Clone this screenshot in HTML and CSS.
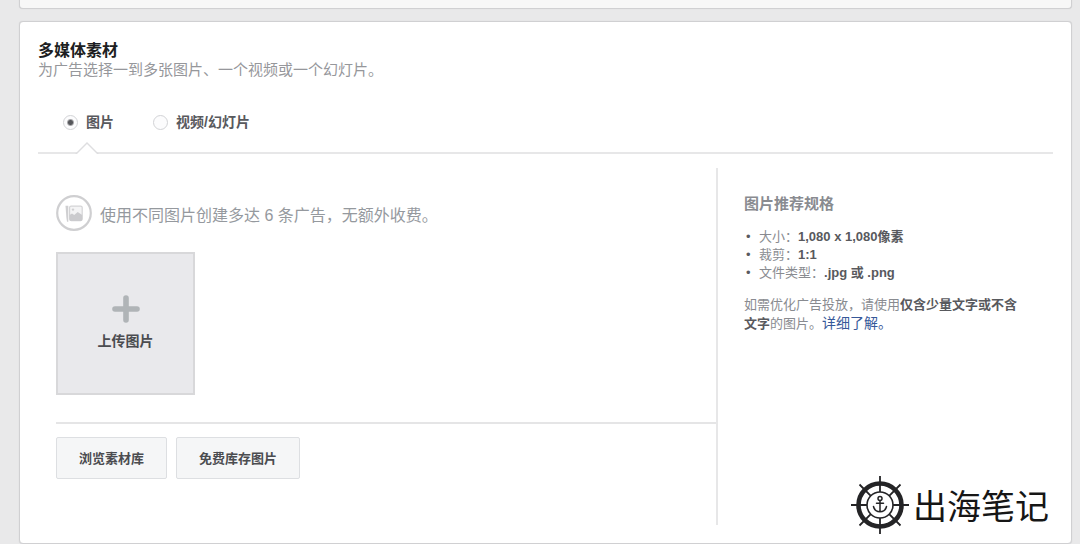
FILE: index.html
```html
<!DOCTYPE html>
<html lang="zh-CN">
<head>
<meta charset="utf-8">
<meta name="viewport" content="width=device-width, initial-scale=1">
<title>多媒体素材</title>
<link rel="stylesheet" href="styles.css">
</head>
<body>
<main class="page">
  <div class="card card-previous"></div>
  <section class="card media">
    <header class="media-header">
      <h1 class="media-title">多媒体素材</h1>
      <p class="media-subtitle">为广告选择一到多张图片、一个视频或一个幻灯片。</p>
    </header>

    <div class="tabs">
      <label class="tab tab-active"><input class="radio" type="radio" name="format" checked>图片</label>
      <label class="tab"><input class="radio" type="radio" name="format">视频/幻灯片</label>
    </div>

    <div class="columns">
      <div class="picker">
        <div class="hint">
          <svg class="hint-icon" viewBox="0 0 36 36" aria-hidden="true">
            <circle cx="18" cy="18" r="16.8" fill="none" stroke="#cfcfd1" stroke-width="2.2"/>
            <path d="M9.500 10.800h2.800v16h-1.300l-.6-4z" fill="#cfcfd1"/>
            <rect x="13.600" y="11.100" width="12.600" height="14.500" rx="1.500" fill="#f4f4f5" stroke="#d4d4d6" stroke-width="1.200"/>
            <circle cx="17" cy="14.600" r="1.200" fill="#cfcfd1"/>
            <path d="M13.600 20l2.400-1.500 2.200 1.500 3.500-3 4.500 3v4.600q0 1.500-1.500 1.500h-9.600q-1.500 0-1.500-1.500z" fill="#cbcbce"/>
          </svg>
          <p class="hint-text">使用不同图片创建多达 6 条广告，无额外收费。</p>
        </div>
        <button class="upload" type="button">
          <svg class="upload-icon" viewBox="0 0 28 28" aria-hidden="true">
            <path d="M14 3v22M3 14h22" stroke="#b0b4b7" stroke-width="5.600" stroke-linecap="round"/>
          </svg>
          上传图片
        </button>
        <div class="actions">
          <button class="button" type="button">浏览素材库</button>
          <button class="button" type="button">免费库存图片</button>
        </div>
      </div>

      <aside class="specs">
        <h2 class="specs-title">图片推荐规格</h2>
        <ul class="specs-list">
          <li>大小：<b>1,080 x 1,080像素</b></li>
          <li>裁剪：<b>1:1</b></li>
          <li>文件类型：<b>.jpg 或 .png</b></li>
        </ul>
        <p class="specs-note">如需优化广告投放，请使用<b>仅含少量文字或不含文字</b>的图片。<a class="link" href="#">详细了解。</a></p>
      </aside>
    </div>

    <div class="brand">
      <svg class="brand-icon" viewBox="0 0 58 58" fill="none" stroke="#242426" aria-hidden="true">
        <circle cx="29" cy="29" r="21.5" stroke-width="4.6"/>
        <circle cx="29" cy="29" r="13" stroke-width="1.6"/>
        <path stroke-width="1.8" d="M29 0v16M29 42v16M0 29h16M42 29h16M8.500 8.500l11.300 11.300M38.200 38.200l11.300 11.300M49.500 8.500L38.200 19.800M19.800 38.200L8.500 49.500"/>
        <g stroke-width="1.5" stroke-linecap="round">
          <circle cx="29" cy="22.400" r="2"/>
          <path d="M29 24.500v11M25.500 27.300h7M22.500 30.500q1 5 6.500 5.300q5.500-.3 6.500-5.300"/>
        </g>
      </svg>
      <span class="brand-name">出海笔记</span>
    </div>
  </section>
</main>
</body>
</html>
```
FILE: styles.css
```css
* {
  box-sizing: border-box;
}

body {
  margin: 0;
  background: #fff;
  color: #4b4f56;
  font-family: "Liberation Sans", "Noto Sans CJK SC", sans-serif;
  font-size: 13px;
  line-height: 18px;
}

h1, h2, p, ul {
  margin: 0;
  padding: 0;
}

button {
  font-family: inherit;
  color: #4b4c50;
  cursor: pointer;
}

.page {
  display: flex;
  flex-direction: column;
  gap: 12px;
  padding: 0 8px 0 19px;
  background: #e9e9ea;
}

.card {
  border: 1px solid #d0d0d2;
  border-radius: 4px;
  background: #fff;
  box-shadow: 0 0 1px #c8c8ca;
}

.card-previous {
  height: 9px;
  border-top: 0;
  border-radius: 0 0 4px 4px;
  background: #f7f7f7;
}

.media {
  position: relative;
  padding: 19px 18px 18px;
}

.media-title {
  color: #1d1e22;
  font-size: 16px;
  line-height: 20px;
}

.media-subtitle {
  color: #96979b;
  font-size: 15px;
  line-height: 18px;
}

.tabs {
  display: flex;
  gap: 39px;
  height: 75px;
  padding: 32px 25px 0;
  border-bottom: 2px solid #e7e7e8;
}

.tab {
  position: relative;
  display: flex;
  align-items: center;
  gap: 8px;
  height: 22px;
  color: #58595d;
  font-size: 14px;
  font-weight: bold;
}

.tab-active::after {
  content: "";
  position: absolute;
  top: 31px;
  left: 12px;
  width: 24px;
  height: 12px;
  background: #dedee0;
  clip-path: polygon(0 100%, 50% 0, 100% 100%);
}

.tab-active::before {
  content: "";
  position: absolute;
  z-index: 1;
  top: 33px;
  left: 12px;
  width: 24px;
  height: 12px;
  background: #fff;
  clip-path: polygon(0 100%, 50% 0, 100% 100%);
}

.radio {
  appearance: none;
  width: 15px;
  height: 15px;
  margin: 0;
  border: 1px solid #d2d3d6;
  border-radius: 50%;
  background: #fcfcfd;
}

.radio:checked {
  background: radial-gradient(circle, #55565a 2px, #fcfcfd 4px);
}

.columns {
  display: grid;
  grid-template-columns: minmax(0, 680fr) minmax(0, 335fr);
  padding-top: 14px;
}

.picker {
  padding: 27px 0 46px 18px;
  border-right: 2px solid #e7e7e8;
}

.hint {
  display: flex;
  align-items: center;
  gap: 8px;
}

.hint-icon {
  flex: none;
  width: 36px;
  height: 36px;
}

.hint-text {
  padding-top: 6px;
  color: #95999e;
  font-size: 16px;
  line-height: 24px;
}

.upload {
  display: flex;
  flex-direction: column;
  align-items: center;
  justify-content: center;
  gap: 6px;
  width: 139px;
  height: 143px;
  margin-top: 21px;
  padding: 0;
  border: 2px solid #d8d8da;
  background: #e9e9ec;
  font-size: 14px;
  font-weight: bold;
  line-height: 24px;
}

.upload-icon {
  width: 28px;
  height: 28px;
}

.actions {
  display: flex;
  gap: 9px;
  margin-top: 27px;
  padding-top: 13px;
  border-top: 2px solid #e5e5e6;
}

.button {
  height: 42px;
  padding: 0 22px 2px;
  border: 1px solid #dddfe2;
  border-radius: 2px;
  background: #f5f6f7;
  font-size: 13px;
  font-weight: bold;
}

.specs {
  padding: 26px 24px 0 26px;
  color: #898b90;
}

.specs-title {
  color: #898b90;
  font-size: 15px;
  line-height: 20px;
}

.specs-list {
  margin: 14px 0 13px;
  padding-left: 15px;
  list-style: none;
}

.specs-list li::before {
  content: "•";
  display: inline-block;
  width: 13px;
  margin-left: -13px;
  color: #5a5b5f;
}

.specs-note {
  line-height: 19px;
}

.specs b {
  color: #58595d;
}

.link {
  color: #365899;
  font-size: 14px;
  text-decoration: none;
}

.brand {
  position: absolute;
  right: 22px;
  bottom: 9px;
  display: flex;
  align-items: center;
  gap: 4px;
  color: #161616;
}

.brand-icon {
  width: 58px;
  height: 58px;
}

.brand-name {
  padding-top: 3px;
  font-size: 34px;
  line-height: 48px;
}
```
